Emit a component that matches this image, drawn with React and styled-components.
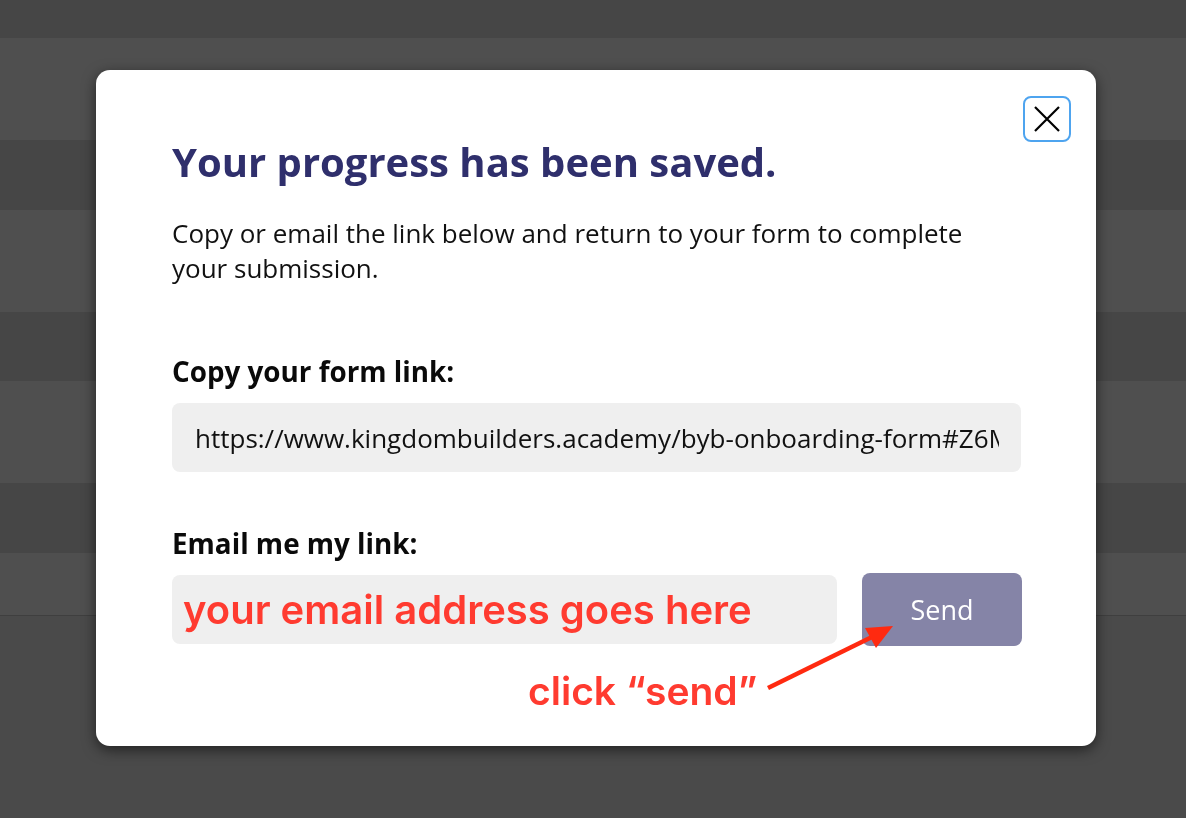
import React from "react";
import styled, { createGlobalStyle } from "styled-components";

const Global = createGlobalStyle`
  * { box-sizing: border-box; }
  html, body { margin: 0; padding: 0; }
  body {
    background: #4a4a4a;
    font-family: "Open Sans", "Noto Sans", sans-serif;
    overflow: hidden;
  }
`;

const Backdrop = styled.div`
  width: 100%;
  min-height: 100vh;
  background: #4a4a4a;
  display: flex;
  flex-direction: column;
`;

const Stripe = styled.div`
  height: ${(p) => p.$h}px;
  background: ${(p) => (p.$dark ? "#464646" : "#4f4f4f")};
  border-bottom: ${(p) => (p.$last ? "1px solid #3f3f3f" : "none")};
`;

const Overlay = styled.div`
  position: fixed;
  inset: 0;
  display: flex;
  justify-content: center;
  align-items: flex-start;
  padding: 70px 0 0 6px;
`;

const Modal = styled.div`
  position: relative;
  width: 1000px;
  height: 676px;
  background: #ffffff;
  border-radius: 14px;
  box-shadow: 0 4px 14px rgba(0, 0, 0, 0.55);
  padding: 68px 75px 0 76px;
  display: flex;
  flex-direction: column;
`;

const CloseButton = styled.button`
  position: absolute;
  top: 26px;
  right: 25px;
  width: 48px;
  height: 46px;
  border: 2px solid #4ea4ef;
  border-radius: 8px;
  background: #fff;
  display: flex;
  align-items: center;
  justify-content: center;
  padding: 0;
  cursor: pointer;
`;

const Title = styled.h1`
  margin: 0;
  font-family: "Open Sans", sans-serif;
  font-weight: 700;
  font-size: 40px;
  line-height: 48px;
  color: #2f2f6c;
`;

const Lead = styled.p`
  margin: 30px 0 0;
  font-size: 26px;
  line-height: 35px;
  color: #111;
  max-width: 810px;
`;

const Label = styled.div`
  margin-top: ${(p) => p.$mt}px;
  font-weight: 700;
  font-size: 27.8px;
  line-height: 30px;
  color: #0a0a0a;
`;

const LinkBox = styled.div`
  margin-top: 17px;
  height: 69px;
  background: #efefef;
  border-radius: 8px;
  padding: 0 22px 0 23px;
  display: flex;
  align-items: center;
  overflow: hidden;
  white-space: nowrap;
  font-size: 26px;
  color: #111;
`;

const Clip = styled.span`
  display: block;
  overflow: hidden;
  width: 100%;
`;

const EmailRow = styled.div`
  margin-top: 15px;
  display: flex;
  align-items: center;
  gap: 25px;
  height: 73px;
`;

const EmailInput = styled.div`
  flex: 0 0 665px;
  height: 69px;
  background: #efefef;
  border-radius: 8px;
  padding: 0 11px;
  display: flex;
  align-items: center;
`;

const RedText = styled.span`
  font-family: "Inter", "Lato", sans-serif;
  font-weight: 600;
  font-size: ${(p) => p.$size || 40}px;
  color: #ff3b30;
  white-space: nowrap;
`;

const SendButton = styled.button`
  flex: 0 0 160px;
  height: 73px;
  border: none;
  border-radius: 8px;
  background: #8584a7;
  color: #fff;
  font-family: "Open Sans", sans-serif;
  font-size: 27px;
  padding: 0;
`;

const NoteRow = styled.div`
  margin-top: 24px;
  height: 40px;
  display: flex;
  align-items: center;
  padding-left: 356px;
`;

const Arrow = styled.svg`
  position: absolute;
  left: 0;
  top: 0;
  pointer-events: none;
`;

export default function App() {
  const stripes = [
    [38, true],
    [102, false],
    [70, true],
    [102, false],
    [69, true],
    [102, false],
    [70, true],
    [63, false],
  ];
  return (
    <>
      <Global />
      <Backdrop>
        {stripes.map(([h, d], i) => (
          <Stripe key={i} $h={h} $dark={d} $last={i === stripes.length - 1} />
        ))}
      </Backdrop>
      <Overlay>
        <Modal>
          <CloseButton aria-label="Close">
            <svg width="26" height="26" viewBox="0 0 26 26">
              <path d="M1 1 L25 25 M25 1 L1 25" stroke="#000" strokeWidth="2.2" fill="none" />
            </svg>
          </CloseButton>
          <Title>Your progress has been saved.</Title>
          <Lead>
            Copy or email the link below and return to your form to complete your submission.
          </Lead>
          <Label $mt={70}>Copy your form link:</Label>
          <LinkBox>
            <Clip>https://www.kingdombuilders.academy/byb-onboarding-form#Z6MkQp3xRt</Clip>
          </LinkBox>
          <Label $mt={56}>Email me my link:</Label>
          <EmailRow>
            <EmailInput>
              <RedText>your email address goes here</RedText>
            </EmailInput>
            <SendButton>Send</SendButton>
          </EmailRow>
          <NoteRow>
            <RedText $size={39}>click “send”</RedText>
          </NoteRow>
          <Arrow width="1000" height="676" viewBox="0 0 1000 676">
            <line x1="672" y1="618" x2="778" y2="566" stroke="#ff2a10" strokeWidth="4.5" />
            <polygon points="797,556 769,558 780,578" fill="#ff2a10" />
          </Arrow>
        </Modal>
      </Overlay>
    </>
  );
}
